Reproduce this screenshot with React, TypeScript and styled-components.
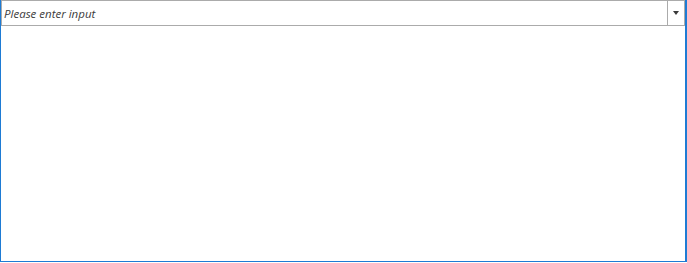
import styled, { createGlobalStyle } from 'styled-components';

const GlobalStyle = createGlobalStyle`
	html, body {
		margin: 0;
		padding: 0;
		background: #ffffff;
	}
`;

const Frame = styled.div`
	box-sizing: border-box;
	width: 687px;
	height: 262px;
	display: flex;
	flex-direction: column;
	border-left: 1px solid #1e7bd4;
	border-right: 2px solid #1e7bd4;
	border-bottom: 1px solid #1e7bd4;
	box-shadow: 0 1px 0 #c8c8c8;
	background: #ffffff;
`;

const ComboBox = styled.div`
	box-sizing: border-box;
	height: 26px;
	display: flex;
	align-items: stretch;
	border: 1px solid #ababab;
`;

const Input = styled.input`
	flex: 1;
	min-width: 0;
	border: none;
	outline: none;
	padding: 0 0 0 2px;
	font-family: 'Open Sans', 'Noto Sans', sans-serif;
	font-size: 11.5px;
	font-style: italic;
	color: #333333;
	background: transparent;

	&::placeholder {
		color: #3c3c3c;
		opacity: 1;
	}
`;

const DropButton = styled.div`
	width: 16px;
	display: flex;
	align-items: center;
	justify-content: center;
	border-left: 1px solid #ababab;
`;

const Arrow = styled.span`
	width: 0;
	height: 0;
	border-left: 3.5px solid transparent;
	border-right: 3.5px solid transparent;
	border-top: 4px solid #3a3a3a;
`;

const Body = styled.div`
	flex: 1;
`;

const App = () => {
	return (
		<>
			<GlobalStyle />
			<Frame>
				<ComboBox>
					<Input placeholder='Please enter input' />
					<DropButton>
						<Arrow />
					</DropButton>
				</ComboBox>
				<Body />
			</Frame>
		</>
	);
};

export default App;
